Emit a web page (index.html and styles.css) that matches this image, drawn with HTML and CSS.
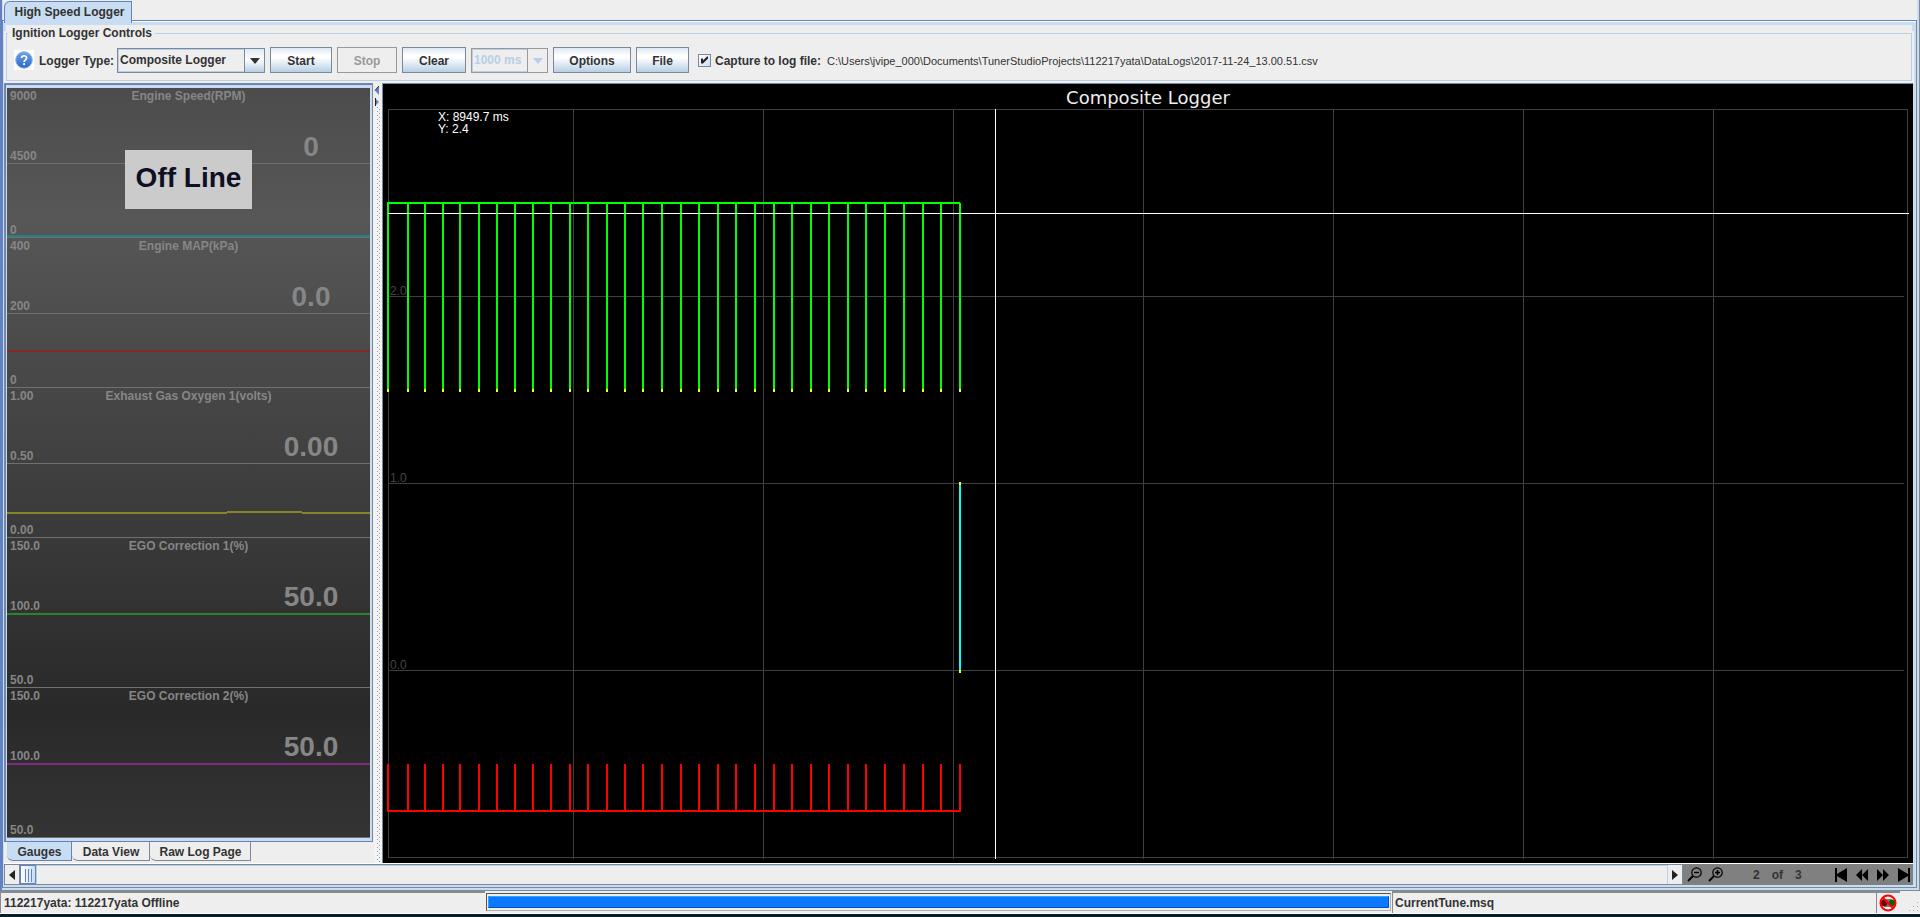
FILE: index.html
```html
<!DOCTYPE html>
<html lang="en">
<head>
<meta charset="utf-8">
<title>High Speed Logger</title>
<link rel="stylesheet" href="styles.css">
</head>
<body>
<main class="app">
  <nav class="top-tabs"><button class="top-tab" type="button">High Speed Logger</button></nav>
  <section class="pane">
    <fieldset class="controls">
      <legend>Ignition Logger Controls</legend>
      <div class="controls-row">
        <button class="help" type="button" aria-label="Help">
          <svg width="20" height="20" viewBox="0 0 20 20">
            <defs><linearGradient id="ball" x1="0" y1="0" x2="0" y2="1"><stop offset="0" stop-color="#6aa4ea"/><stop offset="1" stop-color="#2c66c8"/></linearGradient></defs>
            <rect width="20" height="20" fill="#fff"/>
            <circle cx="10" cy="10" r="8.3" fill="url(#ball)" stroke="#8fb4e6"/>
            <path d="M7.6 8.1C7.6 5 12.6 5 12.6 8C12.6 9.9 10.1 9.8 10.1 12" fill="none" stroke="#fff" stroke-width="1.7"/>
            <circle cx="10.1" cy="14.2" r="1.1" fill="#fff"/>
          </svg>
        </button>
        <label class="type-label" for="type">Logger Type:</label>
        <span class="combo combo-type"><select id="type"><option>Composite Logger</option></select></span>
        <button class="btn btn-start" type="button">Start</button>
        <button class="btn btn-stop" type="button" disabled>Stop</button>
        <button class="btn btn-clear" type="button">Clear</button>
        <span class="combo combo-time combo-off"><select aria-label="Interval" disabled><option>1000 ms</option></select></span>
        <button class="btn btn-options" type="button">Options</button>
        <button class="btn btn-file" type="button">File</button>
        <input class="check" id="capture" type="checkbox" checked>
        <label class="capture-label" for="capture">Capture to log file:</label>
        <span class="path">C:\Users\jvipe_000\Documents\TunerStudioProjects\112217yata\DataLogs\2017-11-24_13.00.51.csv</span>
      </div>
    </fieldset>

    <div class="split">
      <div class="left">
        <div class="gauge-frame">
          <div class="gauges">
            <section class="gauge">
              <div class="half"><span class="max">9000</span><h2>Engine Speed(RPM)</h2><output>0</output><span class="mid">4500</span></div>
              <div class="half low"><span class="min">0</span></div>
              <i class="trace" style="top:98.6%;background:#268080"></i>
            </section>
            <section class="gauge">
              <div class="half"><span class="max">400</span><h2>Engine MAP(kPa)</h2><output>0.0</output><span class="mid">200</span></div>
              <div class="half low"><span class="min">0</span></div>
              <i class="trace" style="top:75%;background:#862828"></i>
            </section>
            <section class="gauge">
              <div class="half"><span class="max">1.00</span><h2>Exhaust Gas Oxygen 1(volts)</h2><output>0.00</output><span class="mid">0.50</span></div>
              <div class="half low"><span class="min">0.00</span></div>
              <svg class="wave" viewBox="0 0 362 150" preserveAspectRatio="none" shape-rendering="crispEdges"><path d="M0 126H219M294 126H362M219 125H294"/></svg>
            </section>
            <section class="gauge">
              <div class="half"><span class="max">150.0</span><h2>EGO Correction 1(%)</h2><output>50.0</output><span class="mid">100.0</span></div>
              <div class="half low"><span class="min">50.0</span></div>
              <i class="trace" style="top:50%;background:#288628"></i>
            </section>
            <section class="gauge">
              <div class="half"><span class="max">150.0</span><h2>EGO Correction 2(%)</h2><output>50.0</output><span class="mid">100.0</span></div>
              <div class="half low"><span class="min">50.0</span></div>
              <i class="trace" style="top:50%;background:#862886"></i>
            </section>
            <strong class="offline">Off Line</strong>
          </div>
        </div>
        <nav class="sub-tabs">
          <button class="sub-tab active" type="button">Gauges</button>
          <button class="sub-tab" type="button">Data View</button>
          <button class="sub-tab" type="button">Raw Log Page</button>
        </nav>
      </div>

      <div class="divider">
        <svg width="8" height="24" viewBox="0 0 8 24"><path d="M5 3v9L1 7.500z" fill="#6382bf"/><path d="M5 3L1 7.500" stroke="#222"/><path d="M1 15v8l4-4z" fill="#6382bf"/><path d="M1.500 15v8" stroke="#222"/></svg>
      </div>

      <div class="chart">
        <svg class="plot" viewBox="0 0 1530 779" preserveAspectRatio="none" shape-rendering="crispEdges">
          <g fill="none" stroke="#404040">
            <path d="M5.500 25.500H1524.500V773.500H5.500z"/>
            <path d="M190.500 25V775M380.500 25V775M570.500 25V775M760.500 25V775M950.500 25V775M1140.500 25V775M1330.500 25V775"/>
            <path d="M5 212.500H1521M5 399.500H1521M5 586.500H1521"/>
          </g>
          <g fill="none" stroke-width="2">
            <path stroke="#0f0" d="M4 119H577M5 119V305M25 119V305M42 119V305M60 119V305M77 119V305M96 119V305M114 119V305M132 119V305M150 119V305M168 119V305M187 119V305M205 119V305M224 119V305M242 119V305M260 119V305M279 119V305M298 119V305M316 119V305M335 119V305M353 119V305M372 119V305M391 119V305M409 119V305M428 119V305M446 119V305M465 119V305M483 119V305M502 119V305M521 119V305M540 119V305M558 119V305M577 119V305"/>
            <path stroke="#ff0" d="M5 305v3M25 305v3M42 305v3M60 305v3M77 305v3M96 305v3M114 305v3M132 305v3M150 305v3M168 305v3M187 305v3M205 305v3M224 305v3M242 305v3M260 305v3M279 305v3M298 305v3M316 305v3M335 305v3M353 305v3M372 305v3M391 305v3M409 305v3M428 305v3M446 305v3M465 305v3M483 305v3M502 305v3M521 305v3M540 305v3M558 305v3M577 305v3M577 398v3M577 586v3"/>
            <path stroke="#0ff" d="M577 401V586"/>
            <path stroke="#f00" d="M4 727H578M5 680V727M25 680V727M42 680V727M60 680V727M77 680V727M96 680V727M114 680V727M132 680V727M150 680V727M168 680V727M187 680V727M205 680V727M224 680V727M242 680V727M260 680V727M279 680V727M298 680V727M316 680V727M335 680V727M353 680V727M372 680V727M391 680V727M409 680V727M428 680V727M446 680V727M465 680V727M483 680V727M502 680V727M521 680V727M540 680V727M558 680V727M577 680V727"/>
          </g>
          <path stroke="#fff" d="M5 129.500H1526M612.500 25V775"/>
        </svg>
        <h1 class="chart-title">Composite Logger</h1>
        <p class="cursor">X: 8949.7 ms<br>Y: 2.4</p>
        <span class="tick" style="bottom:72.5%">2.0</span>
        <span class="tick" style="bottom:48.5%">1.0</span>
        <span class="tick" style="bottom:24.5%">0.0</span>
      </div>
    </div>

    <div class="scroll-row">
      <div class="scrollbar">
        <button class="arrow" type="button" aria-label="Scroll left"><svg width="6" height="10" viewBox="0 0 6 10"><path d="M6 0v10L0 5z"/></svg></button>
        <div class="thumb"></div>
        <div class="track"></div>
        <button class="arrow arrow-right" type="button" aria-label="Scroll right"><svg width="6" height="10" viewBox="0 0 6 10"><path d="M0 0v10L6 5z"/></svg></button>
      </div>
      <div class="pager">
        <button type="button" aria-label="Zoom out"><svg width="15" height="15" viewBox="0 0 15 15" fill="none" stroke="#000"><circle cx="9.500" cy="5.500" r="4.700" stroke-width="1.200"/><path d="M7 5.500h5" stroke-width="1.400"/><path d="M6 9L1 14" stroke-width="2"/></svg></button>
        <button type="button" aria-label="Zoom in"><svg width="15" height="15" viewBox="0 0 15 15" fill="none" stroke="#000"><circle cx="9.500" cy="5.500" r="4.700" stroke-width="1.200"/><path d="M7 5.500h5M9.500 3v5" stroke-width="1.600"/><path d="M6 9L1 14" stroke-width="2"/></svg></button>
        <span class="page">2</span><span class="page">of</span><span class="page">3</span>
        <span class="nav">
          <button type="button" aria-label="First"><svg width="12" height="14" viewBox="0 0 12 14"><path d="M0 0h2v6L12 0v14L2 8v6H0z"/></svg></button>
          <button type="button" aria-label="Previous"><svg width="12" height="14" viewBox="0 0 12 14"><path d="M6 1v12L0 7zM12 1v12L6 7z"/></svg></button>
          <button type="button" aria-label="Next"><svg width="12" height="14" viewBox="0 0 12 14"><path d="M0 1v12L6 7zM6 1v12l6-6z"/></svg></button>
          <button type="button" aria-label="Last"><svg width="12" height="14" viewBox="0 0 12 14"><path d="M12 0h-2v6L0 0v14l10-6v6h2z"/></svg></button>
        </span>
      </div>
    </div>
  </section>
</main>
<footer class="status">
  <div class="cell">112217yata: 112217yata Offline</div>
  <div class="progress-cell"><progress max="100" value="100" aria-label="Progress"></progress></div>
  <div class="cell">CurrentTune.msq</div>
  <div class="cell cell-icon">
    <svg width="18" height="18" viewBox="0 0 18 18"><rect x="5" y="5" width="8" height="8" fill="#777"/><circle cx="5" cy="9" r="3.200" fill="#600"/><circle cx="13" cy="9" r="3.200" fill="#060"/><circle cx="9" cy="9" r="7.500" fill="none" stroke="#f00" stroke-width="2"/><path d="M3.700 3.700L14.300 14.300" stroke="#f00" stroke-width="2"/></svg>
  </div>
  <svg class="grip" width="11" height="11" viewBox="0 0 11 11" fill="#a8a8a8"><path d="M8 0h1v1h-1zM4 4h1v1h-1zM8 4h1v1h-1zM0 8h1v1h-1zM4 8h1v1h-1zM8 8h1v1h-1z"/></svg>
</footer>
<div class="desktop-edge"></div>
</body>
</html>
```

FILE: styles.css
```css
* { box-sizing: border-box; }
body {
  margin: 0;
  height: 100vh;
  display: flex;
  flex-direction: column;
  background: #eee;
  color: #333;
  font: bold 12px/14px "Liberation Sans", Arial, sans-serif;
  overflow: hidden;
}
button, select { font: inherit; color: inherit; margin: 0; padding: 0; }
button { border: 0; background: none; }
svg { display: block; }
h1, h2, p { margin: 0; }

.app {
  flex: 1;
  min-height: 0;
  display: flex;
  flex-direction: column;
  padding: 0 2px 2px 0;
  border: solid #7a8a99;
  border-width: 0 1px 1px 0;
  border-left: 2px solid #6382bf;
  box-shadow: inset -2px -2px #c8ddf2, inset 1px 0 #c8ddf2;
}
.top-tabs { height: 20px; padding: 1px 0 0 2px; }
.top-tab {
  position: relative;
  height: 22px;
  width: 128px;
  padding: 0 0 2px 3px;
  background: #c8ddf2;
  border: 1px solid #6382bf;
  border-bottom: 0;
  border-top-left-radius: 6px;
}
.pane {
  flex: 1;
  min-height: 0;
  display: flex;
  flex-direction: column;
  border: 1px solid #7a8a99;
  border-top-color: #6382bf;
  border-left-color: #6382bf;
  padding: 3px 3px 2px 1px;
  background: linear-gradient(#fff 0 1px, #c8ddf2 1px);
}

.controls {
  margin: 2px 1px 2px 2px;
  min-width: 0;
  padding: 7px;
  border: 1px solid #b8cfe5;
  flex: none;
  background: #eee;
  box-shadow: 0 0 0 2px #eee, 0 -8px #eee;
}
.controls legend { padding: 0 3px 0 4px; margin-left: -6px; height: 14px; }
.controls-row { display: flex; align-items: center; height: 26px; }
.help { width: 20px; height: 20px; margin-right: 5px; }
.type-label { width: 78px; padding-top: 2px; }
.combo { position: relative; display: flex; height: 25px; margin-right: 5px; border: 1px solid #7a8a99; background: #eee; }
.combo select {
  appearance: none;
  width: 100%;
  border: 1px solid #b8cfe5;
  border-radius: 0;
  background: #eee;
  padding: 0 0 0 1px;
}
.combo::before {
  content: "";
  position: absolute;
  right: 0; top: 0; bottom: 0;
  width: 19px;
  border-left: 1px solid #7a8a99;
  background: linear-gradient(#dde8f3, #fff 45%, #b8cfe5);
  pointer-events: none;
}
.combo::after {
  content: "";
  position: absolute;
  right: 4px; top: 9px;
  border: 5px solid transparent;
  border-top: 6px solid #333;
  border-bottom: 0;
  pointer-events: none;
}
.combo-type { width: 148px; }
.combo-time { width: 77px; }
.combo-off { border-color: #999; }
.combo-off select { color: #b8cfe5; opacity: 1; }
.combo-off::before { background: #eee; border-color: #999; }
.combo-off::after { border-top-color: #b8cfe5; }
.btn {
  height: 26px;
  margin-right: 5px;
  padding-top: 2px;
  border: 1px solid #7a8a99;
  background: linear-gradient(#dde8f3, #fff 30%, #fff 40%, #b8cfe5);
}
.btn:disabled { color: #999; border-color: #999; background: #eee; }
.btn-start { width: 62px; }
.btn-stop { width: 60px; }
.btn-clear { width: 64px; }
.btn-options { width: 78px; }
.btn-file { width: 53px; margin-right: 9px; }
.check {
  appearance: none;
  width: 13px;
  height: 13px;
  margin: 0 4px 0 0;
  border: 1px solid #7a8a99;
  background: linear-gradient(135deg, #fff, #c8ddf2);
  position: relative;
}
.check:checked::after {
  content: "";
  position: absolute;
  inset: 0;
  background: #222;
  clip-path: polygon(2px 4px, 4px 4px, 4px 6px, 8px 2px, 9px 2px, 9px 4px, 4px 9px, 2px 9px);
}
.capture-label { width: 112px; padding-top: 2px; }
.path { padding-top: 2px; font-weight: normal; font-size: 11px; white-space: nowrap; }

.split { flex: 1; min-height: 0; display: grid; grid-template-columns: 370px 8px 1fr; background: #eee; }
.left { display: flex; flex-direction: column; min-height: 0; }
.gauge-frame {
  flex: 1;
  min-height: 0;
  margin-right: 1px;
  padding: 4px 2px 3px 2px;
  border: 1px solid #7a8a99;
  border-bottom-color: #6382bf;
  background: #c8ddf2;
  box-shadow: inset 1px 1px #6382bf;
}
.gauges {
  position: relative;
  height: 100%;
  display: grid;
  grid-template-rows: repeat(5, minmax(0, 1fr));
  background: linear-gradient(#4c4c4c, #575757 17%, #292929 83%, #343434);
  color: #868686;
}
.gauge {
  position: relative;
  display: grid;
  grid-template-rows: minmax(0, 76fr) minmax(0, 73fr);
  border-bottom: 1px solid #707070;
}
.half {
  display: grid;
  grid-template-columns: 1fr 1fr;
  grid-template-rows: 14px minmax(0, 1fr) 14px;
  padding: 1px 3px 0;
  border-bottom: 1px solid #707070;
}
.max, .mid { grid-column: 1; }
.max, .half h2 { grid-row: 1; }
.mid { grid-row: 3; }
.half h2 { grid-column: 1 / 3; justify-self: center; font: inherit; }
.half output {
  grid-column: 2;
  grid-row: 1 / 4;
  width: 112px;
  margin-left: 68px;
  padding-top: 44px;
  justify-self: start;
  text-align: center;
  font-size: 28px;
  line-height: 28px;
}
.low { border-bottom: 0; }
.min { grid-row: 3; }
.trace { position: absolute; left: 0; right: 0; height: 2px; }
.wave { position: absolute; width: 100%; height: 100%; fill: none; stroke: #868628; stroke-width: 2px; }
.offline {
  position: absolute;
  left: 118px;
  top: 62px;
  width: 127px;
  height: 59px;
  background: #cbcbcb;
  color: #0f0f23;
  font-size: 28px;
  line-height: 56px;
  text-align: center;
}
.sub-tabs { display: flex; height: 21px; padding-left: 3px; align-items: flex-start; }
.sub-tab {
  height: 19px;
  width: 78px;
  padding: 2px 0 0 1px;
  border: 1px solid #7a8a99;
  border-top: 0;
  border-left: 0;
  border-bottom-left-radius: 6px;
}
.sub-tab.active { width: 65px; background: #c8ddf2; border-color: #6382bf; }
.sub-tab:last-child { width: 101px; }

.divider {
  background:
    linear-gradient(#8a96a3 1px, transparent 1px) 3px 0 / 1px 4px repeat-y,
    linear-gradient(#8a96a3 1px, transparent 1px) 5px 2px / 1px 4px repeat-y,
    #f4f4f4;
}
.divider svg { background: #eee; }
.chart { position: relative; min-height: 0; border: solid #7a8a99; border-width: 1px 0 0 1px; background: #000; overflow: hidden; font-weight: normal; }
.plot { width: 100%; height: 100%; }
.chart-title { position: absolute; left: 0; right: 0; top: 3px; text-align: center; color: #eee; font: 18px/22px "DejaVu Sans", sans-serif; }
.cursor { position: absolute; left: 55px; top: 27px; color: #fff; line-height: 12px; }
.tick { position: absolute; left: 7px; color: #444; line-height: 14px; }

.scroll-row { display: flex; height: 22px; border-top: 1px solid #fff; background: #808080; flex: none; }
.scrollbar { flex: 1; display: flex; border: 1px solid #7a8a99; background: #eee; }
.arrow { width: 15px; display: grid; place-items: center; fill: #222; border-right: 1px solid #7a8a99; }
.arrow-right { border-right: 0; border-left: 1px solid #b8cfe5; }
.thumb {
  width: 16px;
  border: 1px solid #6382bf;
  background:
    linear-gradient(90deg, transparent 4px, #6382bf 4px 5px, transparent 5px 7px, #6382bf 7px 8px, transparent 8px 10px, #6382bf 10px 11px, transparent 11px) 0 3px / 100% 13px no-repeat,
    linear-gradient(90deg, #fff, #c8ddf2);
}
.track { flex: 1; box-shadow: inset 1px 1px #b8cfe5; }
.pager { width: 230px; display: flex; align-items: center; padding: 0 3px 0 4px; }
.pager button { margin-right: 6px; }
.page { margin-left: 12px; }
.pager button + .page { margin-left: 24px; }
.pager .nav { margin-left: auto; display: flex; gap: 9px; }
.pager .nav button { margin: 0; }

.status {
  flex: none;
  height: 23px;
  display: grid;
  grid-template-columns: 485fr 907fr 484fr 24px 20px;
  border-bottom: 1px solid #fff;
}
.cell { border: solid #8a8a8a; border-width: 2px 0 0 1px; padding: 3px 2px; white-space: nowrap; overflow: hidden; }
.cell:first-child { padding-left: 3px; }
.cell-icon { padding: 1px 2px; }
.progress-cell { padding: 2px 1px; display: flex; }
progress {
  appearance: none;
  width: 100%;
  height: 18px;
  border: 1px solid #555;
  border-right-color: #b0b0b0;
  border-bottom-color: #b0b0b0;
  padding: 2px 1px;
  background: #eee;
}
progress::-webkit-progress-bar { background: #eee; }
progress::-webkit-progress-value { background: #0a78ff; border: 1px solid #0a50b0; border-top-color: #2aa8ff; border-left-color: #2aa8ff; }
.grip { align-self: end; justify-self: end; }
.desktop-edge { flex: none; height: 3px; background: #06202a; }
```
